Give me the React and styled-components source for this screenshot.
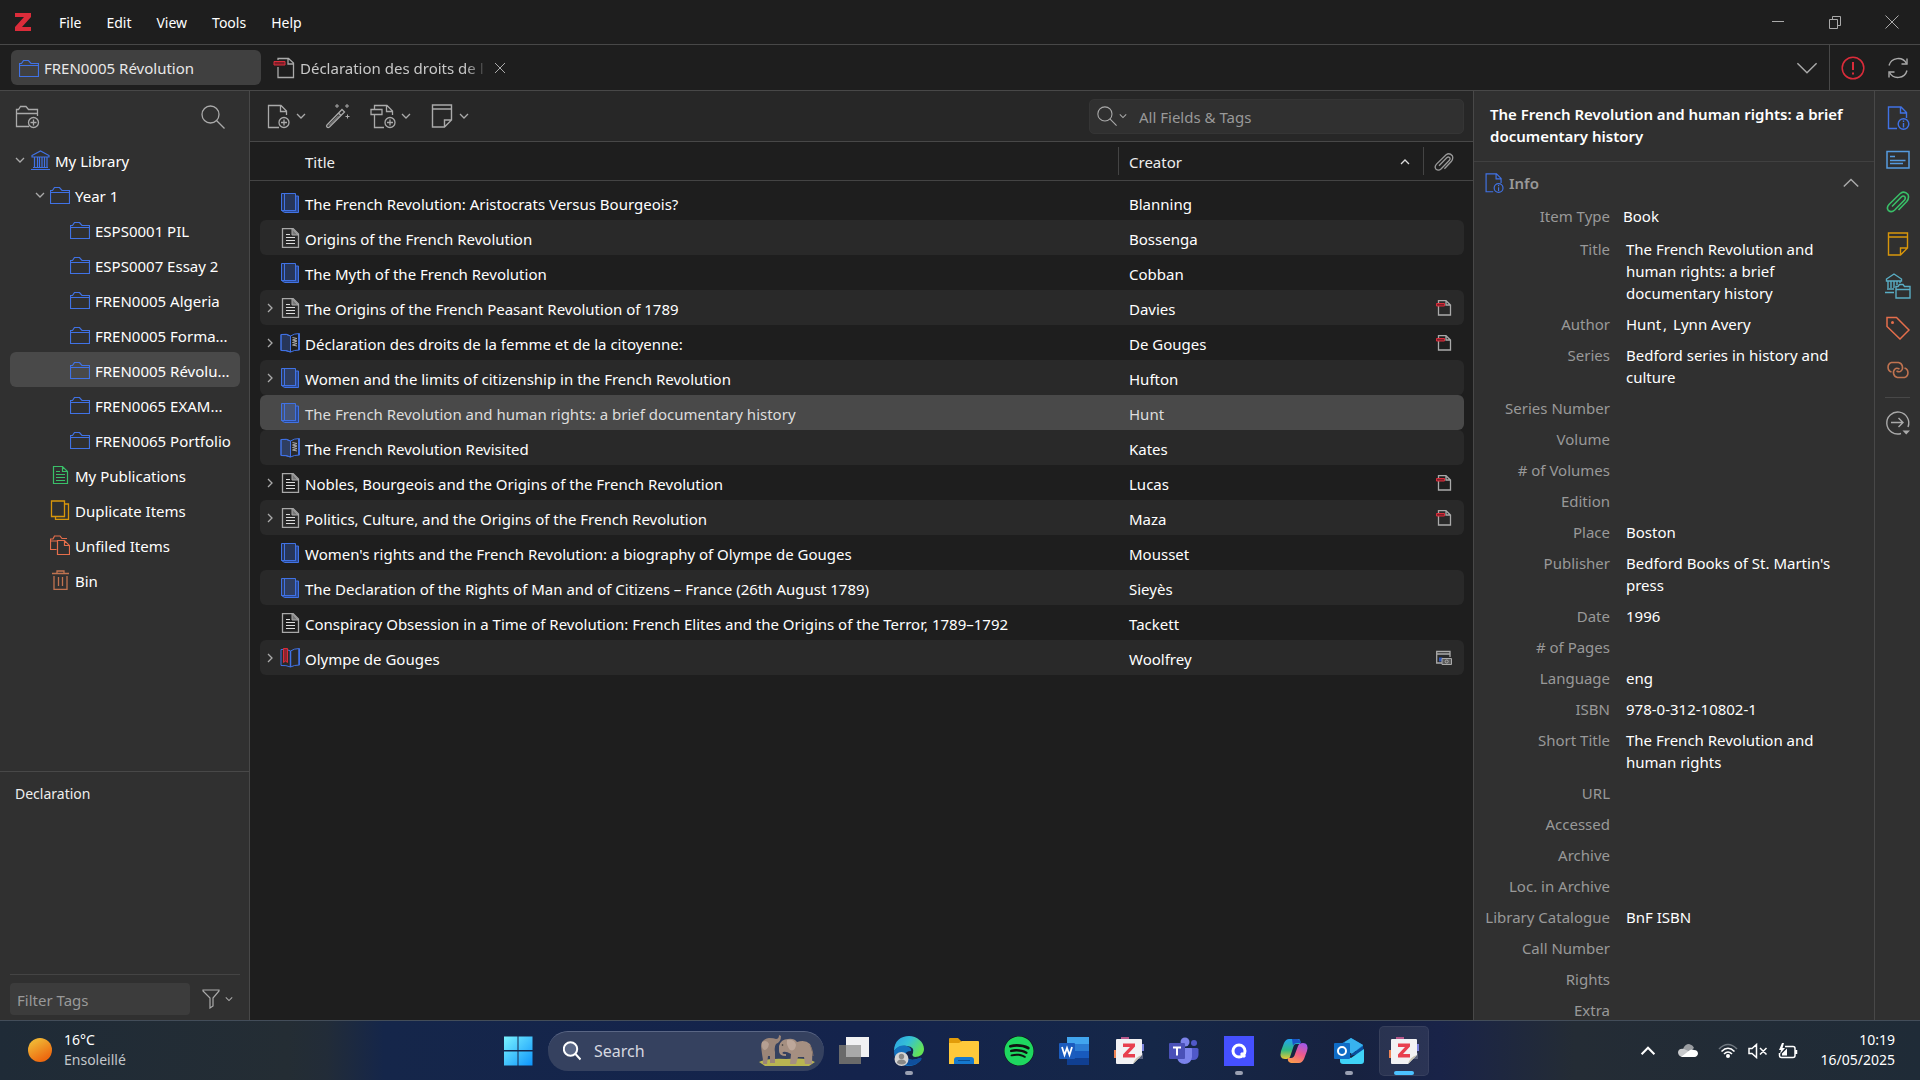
import React, { useState } from "react"
import styled, { createGlobalStyle } from "styled-components"
import { FaSpotify } from "react-icons/fa"

const GlobalStyle = createGlobalStyle`
  * {
    box-sizing: border-box;
  }
  body {
    margin: 0;
    background: #1e1e1e;
    color: #fff;
    font-family: "Noto Sans", "Open Sans", sans-serif;
    font-size: 15px;
    line-height: 22px;
  }
  button, input, select {
    font: inherit;
    color: inherit;
    background: none;
    border: 0;
    padding: 0;
    margin: 0;
  }
  svg {
    display: block;
    flex: none;
  }
  ul, dl, dd, h1, h2, p {
    margin: 0;
    padding: 0;
    list-style: none;
  }
`

/* ---------- icons ---------- */

const Svg = ({ w = 20, h = 20, children, ...rest }) => (
  <svg width={w} height={h} viewBox={`0 0 ${w} ${h}`} fill="none" stroke="currentColor" aria-hidden="true" {...rest}>
    {children}
  </svg>
)

const Folder = () => (
  <Svg color="#4072e5">
    <path d="M.5 18.5V5.5H2.5L4.5 2.5H9.5L12 5.5H19.5V18.5ZM.5 7.5H19.5" strokeWidth="1.2" />
  </Svg>
)

const Library = () => (
  <Svg color="#4072e5">
    <path d="M1 19.5H20M3 17.5H18M2 5.5L10.500 1L19 5.500V7H2ZM4.500 7V17M7.500 7V17M9.500 7V17M12 7V17M14.500 7V17M17 7V17" strokeWidth="1.200" />
  </Svg>
)

const Publications = () => (
  <Svg color="#39bf68">
    <path d="M3.500 1.500H12.500L17.500 6.500V18.500H3.500ZM12.500 1.500V6.500H17.500M6 6.500H10M6 9.500H15M6 12.500H15M6 15.500H15" strokeWidth="1.200" />
  </Svg>
)

const Duplicate = () => (
  <Svg color="#d8960b">
    <path d="M1.500 1H14.500V16.500H1.500ZM14.500 4H18.500V19.500H5.500V16.500" strokeWidth="1.300" />
  </Svg>
)

const Unfiled = () => (
  <Svg color="#e56e4b">
    <path d="M6.500 14.500H.500V4H3L4.500 1H10L12 3.500H17M.500 6H7M7.500 5.500H14.500L19.500 10.500V19.500H7.500ZM14.500 5.500V10.500H19.500" strokeWidth="1.200" />
  </Svg>
)

const Bin = () => (
  <Svg color="#c07350">
    <path d="M2 3.500H19M7 3V1H14V3M4 6V19.500H17V6M8.500 7V16M12.500 7V16" strokeWidth="1.300" />
  </Svg>
)

const Book = () => (
  <Svg color="#4072e5">
    <path d="M15.500 3H18.500V19.500H4.500L1.500 17.500H15.500Z" fill="#2b4a94" />
    <path d="M1.500 .500H15.500V17.500H1.500Z" fill="#4072e54d" />
    <path d="M4.500 .500V17.500" />
  </Svg>
)

const Article = () => (
  <Svg color="#a8a8a8">
    <path d="M2.500 .500H13L18.500 6V19.500H2.500Z" strokeWidth="1.300" />
    <path d="M12 .500V7H18Z" fill="#777" />
    <path d="M6 6.500H10M6 9.500H15M6 12.500H15M6 15.500H15" stroke="#ddd" />
  </Svg>
)

const Section = () => (
  <Svg color="#4072e5">
    <path d="M1 1.500Q7 .500 10.500 3Q14 .500 19.500 .500V17Q14 17 10.500 19Q6 17 1 17.500Z" />
    <path d="M1 1.500Q7 .500 10.500 3V19Q6 17 1 17.500Z" fill="#4072e54d" />
    <path d="M19 1V17" strokeWidth="2" />
    <path d="M12.500 4.500L17 5.500L12.500 7L17 8L12.500 9.500L17 10.500L12.500 12L17 13" stroke="#aaa" />
  </Svg>
)

const Dictionary = () => (
  <Svg color="#4072e5">
    <path d="M1 1.500Q7 .500 10.500 3Q14 .500 19.500 .500V17Q14 17 10.500 19Q6 17 1 17.500Z" />
    <path d="M10.500 3V19M19 1V17" strokeWidth="1.500" />
    <path d="M3.500 .500H7.500V14.500L5.500 13L3.500 14.500Z" fill="#8a2530" stroke="#db2c3a" />
  </Svg>
)

const SmallPdf = () => (
  <Svg w={16} h={16} color="#aaa">
    <path d="M2.500 .700H10L14.500 5V15H2.500ZM10 1V5H14.500" strokeWidth="1.300" />
    <path d="M.500 3.500H8.500V6H.500Z" fill="#7c1f29" stroke="#db2c3a" />
  </Svg>
)

const Snapshot = () => (
  <Svg w={16} h={16} color="#aaa">
    <path d="M6 13H.700V1.500H14V7M1 4H14" strokeWidth="1.300" />
    <path d="M3 7.500H6.500V11.500H3Z" fill="#2f55b5" stroke="none" />
    <path d="M6 8.500H15.500V14.500H6Z" fill="#5a5a5a" />
    <circle cx="10.700" cy="11.500" r="1.500" />
  </Svg>
)

const TabPdf = () => (
  <Svg w={22} h={22} color="#aaa">
    <path d="M5 10V20.500H20.500V6L15.500 1.500H5V3M15 1.500V7H20.500" strokeWidth="1.300" />
    <path d="M1 4.500H12V8H1Z" fill="#7c1f29" stroke="#db2c3a" />
  </Svg>
)

const NewCollection = () => (
  <Svg w={25} h={25}>
    <path d="M14 22.500H1.500V5.500H3.500L5.500 2.500H11L13.500 5.500H22.500V12M1.500 9.500H22.500" strokeWidth="1.300" />
    <circle cx="18.500" cy="18.500" r="5" strokeWidth="1.300" />
    <path d="M18.500 15.500V21.500M15.500 18.500H21.500" strokeWidth="1.300" />
  </Svg>
)

const Magnifier = ({ size = 24 }) => (
  <Svg w={size} h={size} viewBox="0 0 24 24">
    <circle cx="9.500" cy="9.500" r="8.500" strokeWidth="1.300" />
    <path d="M15.500 15.500L23.500 23.500" strokeWidth="1.300" />
  </Svg>
)

const NewItem = () => (
  <Svg w={24} h={25}>
    <path d="M12 23.500H1.500V1.500H14L19.500 7V11M13.500 1.500V7.500H19.500" strokeWidth="1.300" />
    <circle cx="17" cy="18.500" r="5" strokeWidth="1.300" />
    <path d="M17 15.500V21.500M14 18.500H20" strokeWidth="1.300" />
  </Svg>
)

const Wand = () => (
  <Svg w={26} h={26}>
    <path d="M2 22L17 6.500L19.500 9L4.500 24Q3 25 2 24Q1 23 2 22ZM13.500 10L16 12.500" strokeWidth="1.300" />
    <path d="M4 22.500L14 12.500" />
    <path d="M12 1V5M10 3H14M22 1V5M20 3H24M22.500 11.500V15.500M20.500 13.500H24.500" />
  </Svg>
)

const NewAttachment = () => (
  <Svg w={26} h={25}>
    <path d="M14 23.500H4.500V11M4.500 5V1.500H17L22.500 7V11M16.500 1.500V7.500H22.500M1 5.500H12V10.500H1Z" strokeWidth="1.300" />
    <circle cx="20" cy="18.500" r="5" strokeWidth="1.300" />
    <path d="M20 15.500V21.500M17 18.500H23" strokeWidth="1.300" />
  </Svg>
)

const Note = ({ color }) => (
  <Svg w={24} h={24} color={color}>
    <path d="M2.500 1H21.500V16L14.500 23H2.500ZM2.500 5H21.500M14.500 23V16H21.500" strokeWidth="1.400" />
  </Svg>
)

const InfoDoc = ({ size = 24 }) => (
  <Svg w={size} h={size} viewBox="0 0 24 24" color="#4072e5">
    <path d="M11 22.500H2.500V1H15L20.500 6.500V12M14.500 1V7H20.500" strokeWidth="1.400" />
    <circle cx="17.500" cy="18" r="5.300" strokeWidth="1.400" />
    <path d="M17.500 17V21.500M17.500 14.500V16" strokeWidth="1.400" />
  </Svg>
)

const Abstract = () => (
  <Svg w={24} h={24} color="#559ade">
    <path d="M1 3.500H23V20H1Z" strokeWidth="1.500" />
    <path d="M4 8.500H9M4 12.500H19.500M4 15.500H17" strokeWidth="1.500" />
  </Svg>
)

const Clip = ({ size = 24, color }) => (
  <Svg w={size} h={size} viewBox="0 0 24 24" color={color}>
    <path
      d="M12.500 20L20.700 11.500Q23.500 8 22 4.500Q18.500 .500 14.500 3.300L3 14.500Q0 18 2.500 20.700Q5.500 23 8.700 20L18.500 10Q20 8 18.600 6.500Q17 5.300 15.300 7L6 16.500"
      strokeWidth="1.600"
    />
  </Svg>
)

const LibrariesCollections = () => (
  <Svg w={26} h={26} color="#59adc4">
    <path d="M1.500 6L9 1L16.500 6V8H1.500ZM3 8V15M6 8V15M9 8V15M12 8V12M15 8V10M2 16H9M0 19.500H9" strokeWidth="1.400" />
    <path d="M11 25V13.500H13L14.500 11.500H18L19.500 13.500H25V25ZM11 16.500H25" strokeWidth="1.400" />
  </Svg>
)

const Tag = () => (
  <Svg w={24} h={24} color="#e56e4b">
    <path d="M1 1.500H10.500L23 14L14 23L1 10.500Z" strokeWidth="1.500" />
    <circle cx="6.500" cy="6.500" r="1.500" fill="currentColor" stroke="none" />
  </Svg>
)

const Related = () => (
  <Svg w={26} h={24} color="#c07350">
    <path d="M6.500 14A5 5 0 0 1 6.500 4.500H13.500A5 5 0 0 1 16 13Q14.500 14.500 11.500 13" strokeWidth="1.600" />
    <path d="M19.500 10A5 5 0 0 1 19.500 19.500H12.500A5 5 0 0 1 10 11Q11.500 9.500 14.500 11" strokeWidth="1.600" />
  </Svg>
)

const Locate = () => (
  <Svg w={26} h={26} color="#aaa">
    <path d="M16 23.500A11 11 0 1 1 23 17" strokeWidth="1.400" />
    <path d="M6 12.500H18M13.500 8L18 12.500L13.500 17" strokeWidth="1.400" />
    <path d="M17.500 20.500H25L21.200 24.500Z" fill="currentColor" stroke="none" />
  </Svg>
)

const Funnel = () => (
  <Svg w={18} h={20}>
    <path d="M1 1H17V2L11 9V17L8 19V9L1 2Z" strokeWidth="1.200" />
  </Svg>
)

const chevrons = {
  down: "M1 3L5 7L9 3",
  up: "M1 7L5 3L9 7",
  right: "M3 1L7 5L3 9",
}

const Chevron = ({ dir = "down", size = 10, thin = 1.3 }) => (
  <Svg w={size} h={size} viewBox="0 0 10 10" strokeWidth={thin}>
    <path d={chevrons[dir]} />
  </Svg>
)

const Warning = () => (
  <Svg w={24} h={24} color="#db2c3a">
    <circle cx="12" cy="12" r="10.800" strokeWidth="1.500" />
    <path d="M12 6V14M12 16.500V18.500" strokeWidth="2" />
  </Svg>
)

const Sync = () => (
  <Svg w={22} h={22}>
    <path d="M2 8.500A9.500 9.500 0 0 1 19.500 6.500M20 13.500A9.500 9.500 0 0 1 2.500 15.500" strokeWidth="1.400" />
    <path d="M20 1.500V7H14.500M2 20.500V15H7.500" strokeWidth="1.400" />
  </Svg>
)

/* ---------- taskbar drawings ---------- */

const WindowsLogo = () => (
  <Svg w={30} h={30} stroke="none">
    <linearGradient id="win" x1="0" y1="0" x2="1" y2="1" gradientUnits="objectBoundingBox">
      <stop offset="0" stopColor="#7af3ff" />
      <stop offset="1" stopColor="#0d94fb" />
    </linearGradient>
    <path fill="url(#win)" d="M1 .500H14.500V14H1ZM15.500 .500H29.500V14H15.500ZM1 15.500H14.500V29.500H1ZM15.500 15.500H29.500V29.500H15.500Z" />
  </Svg>
)

const Elephants = () => (
  <Svg w={56} h={34} stroke="none">
    <path d="M0 28Q8 24 27 25Q48 23 56 28L50 32H6Z" fill="#b9b552" />
    <path d="M2 12Q3 5 10 4Q15 4 17 5Q20 5 20 1L22 2Q22 8 17 10Q15 13 16 18V29H11V22H9L8 30H4Q4 24 3 20Z" fill="#9b8578" />
    <path d="M3 8Q8 5 10 10Q9 16 5 16Q2 13 3 8Z" fill="#b59f92" />
    <path d="M20 12Q22 5 29 5Q35 4 38 8Q46 5 51 10Q54 15 53 30H46L45 23H39L37 30H31L32 20Q27 17 24 18Q22 20 27 20V22Q20 22 20 17Z" fill="#a58f81" />
    <path d="M28 6Q36 5 37 11Q36 18 31 16Q27 11 28 6Z" fill="#bda79a" />
    <path d="M51 11Q54 17 54 22" stroke="#8c776a" />
    <circle cx="23.500" cy="11" r=".800" fill="#333" />
  </Svg>
)

const TaskView = () => (
  <Svg w={30} h={28} stroke="none">
    <path d="M0 8H22V27H0Z" fill="#6a6a6a" />
    <path d="M7 0H30V20H7Z" fill="#f1f1f3" />
    <path d="M7 8H22V20H7Z" fill="#a9a9a9" />
  </Svg>
)

const Edge = () => (
  <Svg w={30} h={30} stroke="none">
    <linearGradient id="edgeTop" x1="0" y1="0" x2="1" y2="0.500">
      <stop offset="0" stopColor="#2b9fe6" />
      <stop offset=".5" stopColor="#35c1d5" />
      <stop offset="1" stopColor="#64e356" />
    </linearGradient>
    <path d="M0 15C0 5 7 0 15 0S30 6 30 13C30 18 26 21 21 21Q17 20 19 17Q21 11 13 10Q5 9 0 15Z" fill="url(#edgeTop)" />
    <path d="M0 15Q5 8 13 10Q18 12 17 15Q10 15 12 21Q16 26 26 22Q28 21 27 24Q21 31 13 30Q0 28 0 15Z" fill="#1470bd" />
    <path d="M12 20Q15 27 26 22Q28 21 27 24Q21 31 13 29Q8 24 12 20Z" fill="#0f4f9c" />
    <circle cx="7.500" cy="23" r="7" fill="#d4d4d4" />
    <circle cx="7.500" cy="20.500" r="2.700" fill="#888" />
    <path d="M3 27Q3 23.500 7.500 23.500T12 27Q8 30 3 27Z" fill="#888" />
  </Svg>
)

const Explorer = () => (
  <Svg w={30} h={28} stroke="none">
    <path d="M0 2Q0 1 1 1H9L13 5V9H0Z" fill="#e29c0a" />
    <path d="M0 6H10L13 4H29Q30 4 30 5V27H0Z" fill="#ffc93a" />
    <path d="M5 27V23Q5 20 8 20H22Q25 20 25 23V27Z" fill="#1579cf" />
    <path d="M9 23.500H21" stroke="#0b4e91" />
  </Svg>
)

const Spotify = styled.span`
  display: block;
  border-radius: 50%;
  background: #111;
  color: #1ed760;
  font-size: 30px;
`

const Word = () => (
  <Svg w={30} h={28} stroke="none">
    <path d="M8 0H30V7H8Z" fill="#41a5ee" />
    <path d="M8 7H30V14H8Z" fill="#2b7cd3" />
    <path d="M8 14H30V21H8Z" fill="#185abd" />
    <path d="M8 21H30V28H8Z" fill="#103f91" />
    <rect y="6" width="16" height="16" rx="1" fill="#1b5cbe" />
    <path d="M3 10L5.500 18L8 11L10.500 18L13 10" stroke="#fff" strokeWidth="1.800" />
  </Svg>
)

const ZoteroApp = () => (
  <Svg w={30} h={30} stroke="none">
    <path d="M7 1H15V5H7Z" fill="#b7588a" />
    <path d="M0 14H4V22H0Z" fill="#ee8455" />
    <path d="M26 8H30V15H26Z" fill="#7c83dd" />
    <path d="M24 17H29V23H24Z" fill="#59627e" />
    <path d="M3 3H27Q28 3 28 4V19L19 28H3Q2 28 2 27V4Q2 3 3 3Z" fill="#f2f2f4" />
    <path d="M28 19L19 28Q21 21 28 19Z" fill="#c9c5b3" />
    <path d="M9 7.500H21V10.500L14 18H21V21.500H9V18.500L16 11H9Z" fill="#e8404f" />
  </Svg>
)

const Teams = () => (
  <Svg w={30} h={28} stroke="none">
    <circle cx="16" cy="5" r="4.500" fill="#7b83eb" />
    <circle cx="25" cy="6" r="3" fill="#5059c9" />
    <path d="M18 11H28Q29.500 11 29.500 12.500V18Q29 23 24 23H20Z" fill="#5059c9" />
    <path d="M8 11H22Q23 11 23 12V20Q22 27 15.500 27T8 20Z" fill="#7b83eb" />
    <rect y="6" width="16" height="16" rx="1" fill="#4a51b8" />
    <path d="M4 10.500H12M8 10.500V18.500" stroke="#fff" strokeWidth="2" />
  </Svg>
)

const Qonto = () => (
  <Svg w={30} h={30} stroke="none">
    <path d="M0 0H30V30H0Z" fill="#4550ff" />
    <circle cx="15" cy="15" r="6" stroke="#fff" strokeWidth="3" />
    <path d="M17 17L21 21" stroke="#fff" strokeWidth="3" />
  </Svg>
)

const Copilot = () => (
  <Svg w={30} h={28} stroke="none">
    <linearGradient id="cpl" x1="0" y1="0" x2="0" y2="1">
      <stop offset="0" stopColor="#21a2f3" />
      <stop offset=".55" stopColor="#2fb983" />
      <stop offset="1" stopColor="#e9c832" />
    </linearGradient>
    <linearGradient id="cpr" x1="0.700" y1="0" x2="0.300" y2="1">
      <stop offset="0" stopColor="#a259e8" />
      <stop offset=".5" stopColor="#ee5a8c" />
      <stop offset="1" stopColor="#fb9a4d" />
    </linearGradient>
    <path d="M10 2H20Q22 3 21 7H17Q15 7 14 11L11 20Q10 22 6 22Q0 22 2 14L5 6Q7 2 10 2Z" fill="url(#cpl)" />
    <path d="M13 2H18Q21 2 22 6H18Q15 6 14 9Z" fill="#1b55c8" />
    <path d="M20 26H12Q8 25 9 21H12Q15 21 16 17L19 9Q20 6 24 6Q30 6 28 14L25 22Q23 26 20 26Z" fill="url(#cpr)" />
  </Svg>
)

const Outlook = () => (
  <Svg w={30} h={28} stroke="none">
    <path d="M5 8L17 1L29 8V14H5Z" fill="#1b83d2" />
    <path d="M11 5L17 1L29 8L18 17L10 12Z" fill="#38b2ee" />
    <path d="M29 9L15 19L30 16Z" fill="#0a4f9e" />
    <path d="M30 12V24Q30 27 27 27H9Q6 27 6 24V16L17 21Z" fill="#3fd3f7" />
    <rect y="6" width="16" height="16" rx="1" fill="#0f6cc6" />
    <circle cx="8" cy="14" r="4" stroke="#fff" strokeWidth="2" />
  </Svg>
)

const Cloud = () => (
  <Svg w={20} h={14} stroke="none">
    <path d="M5 5Q7 0 11 0Q15 1 16 4L10 9H2Q1 5 5 5Z" fill="#9a9da1" />
    <path d="M4 13Q0 12 0 8Q1 4 6 5L19 11Q18 13 16 13Z" fill="#c8cacc" />
    <path d="M3 13L12 6Q14 5 16 6Q20 6 20 10Q19 13 16 13Z" fill="#fff" />
  </Svg>
)

const Wifi = () => (
  <Svg w={20} h={16} strokeWidth="1.600">
    <path d="M1 6Q10-3 19 6" stroke="#6f777f" />
    <path d="M3.500 8.500Q10 2 16.500 8.500M6 11Q10 7 14 11" />
    <circle cx="10" cy="13" r="2" fill="currentColor" stroke="none" />
  </Svg>
)

const Muted = () => (
  <Svg w={20} h={16} strokeWidth="1.500">
    <path d="M1 5.500H4L8.500 1.500V14.500L4 10.500H1ZM12 5L18.500 11.500M18.500 5L12 11.500" />
  </Svg>
)

const Battery = () => (
  <Svg w={20} h={16} strokeWidth="1.500">
    <path d="M7 3.500H15Q17 3.500 17 5.500V12.500Q17 14.500 15 14.500H3.500Q1.500 14.500 1.500 12.500V10M18.500 7V11" />
    <path d="M4 0L1 7H3L2 11L7 5H4.500L6 0ZM4 12.500V10.500L9 5.500V12.500Z" fill="currentColor" stroke="none" />
  </Svg>
)

/* ---------- layout ---------- */

const Shell = styled.div`
  display: flex;
  flex-direction: column;
  height: 100vh;
  overflow: hidden;
`

const TitleBar = styled.header`
  display: flex;
  align-items: center;
  height: 45px;
  flex: none;
  padding-left: 15px;
  border-bottom: 1px solid #484848;
`

const Menu = styled.nav`
  display: flex;
  gap: 25px;
  margin-left: 28px;
  padding-top: 1px;
  font-size: 14px;
  flex: 1;
`

const IconButton = styled.button`
  display: flex;
  align-items: center;
  justify-content: center;
  gap: 5px;
  color: ${props => props.$color || "#aaa"};
`

const WindowControls = styled.div`
  display: flex;
  button {
    width: 57px;
    height: 44px;
  }
`

const TabBar = styled.div`
  display: flex;
  align-items: center;
  height: 46px;
  flex: none;
  padding-left: 11px;
  border-bottom: 1px solid #484848;
`

const Tab = styled.button`
  display: flex;
  align-items: center;
  gap: 5px;
  height: 35px;
  padding-left: 8px;
  border-radius: 6px;
  color: ${props => (props.$active ? "#e8e8e8" : "#c8c8c8")};
  background: ${props => (props.$active ? "#404040" : "none")};
  width: ${props => (props.$active ? "250px" : "auto")};
  & + & {
    margin-left: 4px;
  }
`

const FadingText = styled.span`
  width: 188px;
  white-space: nowrap;
  text-align: left;
  mask-image: linear-gradient(to right, #000 165px, transparent);
`

const TabClose = styled(IconButton)`
  width: 24px;
  flex: none;
`

const TabTools = styled.div`
  display: flex;
  align-items: center;
  align-self: stretch;
  margin-left: auto;
  > button {
    height: 45px;
    width: 45px;
  }
  > button:first-child {
    border-right: 1px solid #484848;
    width: 46px;
  }
`

const Body = styled.div`
  display: grid;
  grid-template-columns: 250px minmax(0, 1fr) 401px 46px;
  flex: 1;
  min-height: 0;
`

const Sidebar = styled.aside`
  display: flex;
  flex-direction: column;
  background: #303030;
  border-right: 1px solid #484848;
  min-height: 0;
`

const SidebarTools = styled.div`
  display: flex;
  align-items: center;
  justify-content: space-between;
  height: 51px;
  padding: 0 24px 0 15px;
  flex: none;
`

const Tree = styled.ul`
  flex: 1;
  padding: 0 9px 0 10px;
`

const TreeRow = styled.button`
  display: flex;
  align-items: center;
  width: 100%;
  height: 35px;
  padding-left: ${props => props.$level * 20}px;
  border-radius: 6px;
  background: ${props => (props.$selected ? "#494949" : "none")};
  white-space: nowrap;
`

const Twisty = styled.span`
  display: flex;
  justify-content: center;
  width: 20px;
  flex: none;
  color: #aaa;
`

const RowLabel = styled.span`
  padding: 2px 0 0 5px;
  white-space: nowrap;
`

const TagPanel = styled.section`
  display: flex;
  flex-direction: column;
  height: 249px;
  padding: 11px 9px 5px 10px;
  border-top: 1px solid #484848;
  flex: none;
`

const TagList = styled.div`
  flex: 1;
  padding-left: 5px;
  font-size: 14px;
  border-bottom: 1px solid #444;
  color: #eee;
`

const TagFilter = styled.div`
  display: flex;
  align-items: center;
  gap: 12px;
  padding-top: 8px;
  input {
    width: 180px;
    height: 32px;
    padding: 2px 7px 0;
    border-radius: 4px;
    background: #3c3c3c;
  }
  input::placeholder {
    color: #999;
    opacity: 1;
  }
`

const Main = styled.main`
  display: flex;
  flex-direction: column;
  min-width: 0;
  background: #1e1e1e;
`

const Toolbar = styled.div`
  display: flex;
  align-items: center;
  gap: 19px;
  height: 51px;
  padding: 0 9px 0 17px;
  background: #272727;
  border-bottom: 1px solid #484848;
`

const SearchBox = styled.div`
  display: flex;
  align-items: center;
  width: 375px;
  height: 35px;
  margin-left: auto;
  padding-left: 7px;
  border: 1px solid #353535;
  border-radius: 5px;
  background: #303030;
  color: #aaa;
  button {
    gap: 2px;
  }
  input {
    flex: 1;
    min-width: 0;
    margin-left: 12px;
    padding-top: 2px;
  }
  input::placeholder {
    color: #999;
    opacity: 1;
  }
`

const Items = styled.table`
  display: block;
  thead, tbody {
    display: block;
    padding: 0 9px 0 10px;
  }
  thead {
    border-bottom: 1px solid #444;
  }
  tbody {
    padding-top: 4px;
  }
  tr {
    display: grid;
    grid-template-columns: minmax(0, 1fr) 305px 41px;
    border-radius: 6px;
  }
  th, td {
    display: flex;
    align-items: center;
    padding: 0;
    font-weight: 400;
  }
`

const HeadCell = styled.th`
  && {
    height: 28px;
    margin: 5px 0;
    padding: 1px 13px 0 ${props => props.$indent}px;
    border-left: ${props => (props.$divided ? "1px solid #444" : "0")};
    justify-content: space-between;
    color: #eee;
  }
`

const ItemRow = styled.tr`
  height: 35px;
  background: ${props => (props.$selected ? "#494949" : "transparent")};
  color: ${props => (props.$selected ? "#ddd" : "#fff")};
  &:nth-child(even) {
    background: #292929;
  }
`

const CreatorCell = styled.td`
  && {
    padding: 2px 0 0 11px;
  }
`

const AttachCell = styled.td`
  && {
    justify-content: center;
  }
`

const Details = styled.section`
  background: #303030;
  border-left: 1px solid #484848;
  overflow: hidden;
  min-height: 0;
`

const DetailsTitle = styled.h1`
  height: 71px;
  padding: 12px 16px;
  border-bottom: 1px solid #404040;
  font-size: 15px;
  font-weight: 600;
`

const SectionHead = styled.h2`
  display: flex;
  align-items: center;
  gap: 5px;
  height: 40px;
  padding: 1px 14px 0 10px;
  font-size: 15px;
  font-weight: 600;
  color: #999;
  button {
    margin-left: auto;
  }
`

const Field = styled.div`
  display: grid;
  grid-template-columns: 126px minmax(0, 1fr);
  column-gap: 16px;
  padding: 4px 24px 5px 10px;
  &:first-child {
    padding-top: 3px;
    padding-bottom: 7px;
  }
  dt {
    text-align: right;
    color: #999;
    white-space: nowrap;
  }
  select {
    appearance: none;
    display: block;
    height: 22px;
    margin-left: -3px;
  }
`

const Comma = styled.span`
  margin: 0 6px 0 2px;
`

const Rail = styled.nav`
  display: flex;
  flex-direction: column;
  align-items: center;
  gap: 18px;
  padding-top: 15px;
  background: #303030;
  border-left: 1px solid #484848;
  button {
    width: 26px;
    height: 24px;
  }
  hr {
    width: 25px;
    margin: -3px 0 -5px;
    border: 0;
    border-top: 1px solid #484848;
  }
`

const Taskbar = styled.footer`
  display: grid;
  grid-template-columns: 1fr auto 1fr;
  align-items: center;
  height: 60px;
  flex: none;
  border-top: 1px solid #434d59;
  background: linear-gradient(to right, #1f2b37, #242d34 15%, #222c38 17%, #15264a 20%, #14234c 45%, #152748 60%, #17223f 70%, #192348 75%, #242c35 82%, #1f2b37);
  font-size: 14px;
  line-height: 20px;
`

const Weather = styled.button`
  display: flex;
  align-items: center;
  gap: 12px;
  padding: 0 0 2px 28px;
  text-align: left;
  small {
    display: block;
    font-size: 14px;
    color: #c3c7cb;
  }
`

const Sun = styled.span`
  width: 24px;
  height: 24px;
  border-radius: 50%;
  background: linear-gradient(150deg, #f0b232 20%, #ee6a10 80%);
`

const Apps = styled.div`
  display: flex;
  align-items: center;
  gap: 5px;
  padding-left: 2px;
`

const TaskButton = styled.button`
  display: flex;
  align-items: center;
  justify-content: center;
  position: relative;
  width: 50px;
  height: 50px;
  border-radius: 5px;
  background: ${props => (props.$state === "active" ? "#ffffff14" : "none")};
  box-shadow: ${props => (props.$state === "active" ? "inset 0 0 0 1px #ffffff10" : "none")};
  &::after {
    content: "";
    display: ${props => (props.$state ? "block" : "none")};
    position: absolute;
    bottom: 1px;
    width: ${props => (props.$state === "active" ? 20 : 8)}px;
    height: 4px;
    border-radius: 2px;
    background: ${props => (props.$state === "active" ? "#4cc2ff" : "#9aa0b2")};
  }
`

const TaskSearch = styled.label`
  display: flex;
  align-items: center;
  gap: 13px;
  width: 276px;
  height: 40px;
  padding: 0 9px 0 15px;
  border-radius: 20px;
  border-top: 1px solid #5a6684;
  background: #35415f;
  font-size: 16px;
  input {
    flex: 1;
    min-width: 0;
  }
  input::placeholder {
    color: #d5d8e0;
    opacity: 1;
  }
`

const Tray = styled.div`
  display: flex;
  align-items: center;
  justify-content: flex-end;
  gap: 10px;
  padding-right: 25px;
  time {
    min-width: 87px;
    padding-bottom: 2px;
    text-align: right;
  }
`

const CloudSlot = styled.span`
  padding: 0 10px 0 12px;
`

/* ---------- data ---------- */

const tree = [
  { name: "My Library", level: 0, icon: <Library />, open: true },
  { name: "Year 1", level: 1, icon: <Folder />, open: true },
  { name: "ESPS0001 PIL", level: 2, icon: <Folder /> },
  { name: "ESPS0007 Essay 2", level: 2, icon: <Folder /> },
  { name: "FREN0005 Algeria", level: 2, icon: <Folder /> },
  { name: "FREN0005 Forma...", level: 2, icon: <Folder /> },
  { name: "FREN0005 Révolu...", level: 2, icon: <Folder /> },
  { name: "FREN0065 EXAM...", level: 2, icon: <Folder /> },
  { name: "FREN0065 Portfolio", level: 2, icon: <Folder /> },
  { name: "My Publications", level: 1, icon: <Publications /> },
  { name: "Duplicate Items", level: 1, icon: <Duplicate /> },
  { name: "Unfiled Items", level: 1, icon: <Unfiled /> },
  { name: "Bin", level: 1, icon: <Bin /> },
]

const items = [
  { icon: <Book />, title: "The French Revolution: Aristocrats Versus Bourgeois?", creator: "Blanning" },
  { icon: <Article />, title: "Origins of the French Revolution", creator: "Bossenga" },
  { icon: <Book />, title: "The Myth of the French Revolution", creator: "Cobban" },
  { icon: <Article />, title: "The Origins of the French Peasant Revolution of 1789", creator: "Davies", child: true, file: <SmallPdf /> },
  { icon: <Section />, title: "Déclaration des droits de la femme et de la citoyenne:", creator: "De Gouges", child: true, file: <SmallPdf /> },
  { icon: <Book />, title: "Women and the limits of citizenship in the French Revolution", creator: "Hufton", child: true },
  { icon: <Book />, title: "The French Revolution and human rights: a brief documentary history", creator: "Hunt" },
  { icon: <Section />, title: "The French Revolution Revisited", creator: "Kates" },
  { icon: <Article />, title: "Nobles, Bourgeois and the Origins of the French Revolution", creator: "Lucas", child: true, file: <SmallPdf /> },
  { icon: <Article />, title: "Politics, Culture, and the Origins of the French Revolution", creator: "Maza", child: true, file: <SmallPdf /> },
  { icon: <Book />, title: "Women's rights and the French Revolution: a biography of Olympe de Gouges", creator: "Mousset" },
  { icon: <Book />, title: "The Declaration of the Rights of Man and of Citizens – France (26th August 1789)", creator: "Sieyès" },
  { icon: <Article />, title: "Conspiracy Obsession in a Time of Revolution: French Elites and the Origins of the Terror, 1789–1792", creator: "Tackett" },
  { icon: <Dictionary />, title: "Olympe de Gouges", creator: "Woolfrey", child: true, file: <Snapshot /> },
]

const fields = [
  ["Title", "The French Revolution and human rights: a brief documentary history"],
  ["Author", <>Hunt<Comma>,</Comma>Lynn Avery</>],
  ["Series", "Bedford series in history and culture"],
  ["Series Number", ""],
  ["Volume", ""],
  ["# of Volumes", ""],
  ["Edition", ""],
  ["Place", "Boston"],
  ["Publisher", "Bedford Books of St. Martin's press"],
  ["Date", "1996"],
  ["# of Pages", ""],
  ["Language", "eng"],
  ["ISBN", "978-0-312-10802-1"],
  ["Short Title", "The French Revolution and human rights"],
  ["URL", ""],
  ["Accessed", ""],
  ["Archive", ""],
  ["Loc. in Archive", ""],
  ["Library Catalogue", "BnF ISBN"],
  ["Call Number", ""],
  ["Rights", ""],
  ["Extra", ""],
]

const railItems = [
  ["Info", <InfoDoc />],
  ["Abstract", <Abstract />],
  ["Attachments", <Clip color="#39bf68" />],
  ["Notes", <Note color="#d8960b" />],
  ["Libraries and Collections", <LibrariesCollections />],
  ["Tags", <Tag />],
  ["Related", <Related />],
]

const apps = [
  ["Task View", <TaskView />],
  ["Edge", <Edge />, "open"],
  ["File Explorer", <Explorer />],
  ["Spotify", <Spotify><FaSpotify /></Spotify>],
  ["Word", <Word />],
  ["Zotero", <ZoteroApp />],
  ["Teams", <Teams />],
  ["Qonto", <Qonto />, "open"],
  ["Copilot", <Copilot />],
  ["Outlook", <Outlook />, "open"],
  ["Zotero library", <ZoteroApp />, "active"],
]

const App = () => {
  const [collection, setCollection] = useState(6)
  const [selected, setSelected] = useState(6)

  return (
    <Shell>
      <GlobalStyle />
      <TitleBar>
        <Svg w={16} h={18} stroke="none">
          <path d="M0 0H16V4L7 14H16V18H0V14L9 4H0Z" fill="#db2c3a" />
        </Svg>
        <Menu>
          {["File", "Edit", "View", "Tools", "Help"].map(name => (
            <button key={name}>{name}</button>
          ))}
        </Menu>
        <WindowControls>
          <IconButton aria-label="Minimise">
            <Svg w={14} h={14}><path d="M1 6.500H13" /></Svg>
          </IconButton>
          <IconButton aria-label="Restore">
            <Svg w={14} h={14}><path d="M1.500 4.500H9.500V13.500H1.500ZM4.500 4.500V1.500H12.500V10.500H9.500" /></Svg>
          </IconButton>
          <IconButton aria-label="Close">
            <Svg w={14} h={14}><path d="M.500 .500L13.500 13.500M13.500 .500L.500 13.500" /></Svg>
          </IconButton>
        </WindowControls>
      </TitleBar>

      <TabBar>
        <Tab $active>
          <Folder />
          FREN0005 Révolution
        </Tab>
        <Tab>
          <TabPdf />
          <FadingText>Déclaration des droits de l</FadingText>
        </Tab>
        <TabClose aria-label="Close tab">
          <Svg w={12} h={12}><path d="M1 1L11 11M11 1L1 11" /></Svg>
        </TabClose>
        <TabTools>
          <IconButton aria-label="List tabs"><Chevron size={24} thin={0.6} /></IconButton>
          <IconButton aria-label="Sync error"><Warning /></IconButton>
          <IconButton aria-label="Sync"><Sync /></IconButton>
        </TabTools>
      </TabBar>

      <Body>
        <Sidebar>
          <SidebarTools>
            <IconButton aria-label="New collection"><NewCollection /></IconButton>
            <IconButton aria-label="Filter collections"><Magnifier /></IconButton>
          </SidebarTools>
          <Tree>
            {tree.map((row, i) => (
              <li key={row.name}>
                <TreeRow $level={row.level} $selected={i === collection} onClick={() => setCollection(i)}>
                  <Twisty>{row.open && <Chevron />}</Twisty>
                  {row.icon}
                  <RowLabel>{row.name}</RowLabel>
                </TreeRow>
              </li>
            ))}
          </Tree>
          <TagPanel>
            <TagList>
              <button>Declaration</button>
            </TagList>
            <TagFilter>
              <input placeholder="Filter Tags" aria-label="Filter Tags" />
              <IconButton aria-label="Tag options">
                <Funnel />
                <Chevron size={8} />
              </IconButton>
            </TagFilter>
          </TagPanel>
        </Sidebar>

        <Main>
          <Toolbar>
            <IconButton aria-label="New item"><NewItem /><Chevron /></IconButton>
            <IconButton aria-label="Add by identifier"><Wand /></IconButton>
            <IconButton aria-label="Add attachment"><NewAttachment /><Chevron /></IconButton>
            <IconButton aria-label="New note"><Note /><Chevron /></IconButton>
            <SearchBox>
              <IconButton aria-label="Search mode"><Magnifier size={20} /><Chevron size={8} /></IconButton>
              <input placeholder="All Fields &amp; Tags" aria-label="All Fields &amp; Tags" />
            </SearchBox>
          </Toolbar>
          <Items>
            <thead>
              <tr>
                <HeadCell $indent={45}>Title</HeadCell>
                <HeadCell $indent={10} $divided>
                  Creator
                  <IconButton aria-label="Sorted ascending" $color="#ddd"><Chevron dir="up" /></IconButton>
                </HeadCell>
                <HeadCell $indent={10} $divided aria-label="Attachment"><Clip size={20} color="#999" /></HeadCell>
              </tr>
            </thead>
            <tbody>
              {items.map((item, i) => (
                <ItemRow key={item.title} $selected={i === selected} onClick={() => setSelected(i)}>
                  <td>
                    <Twisty>{item.child && <Chevron dir="right" />}</Twisty>
                    {item.icon}
                    <RowLabel>{item.title}</RowLabel>
                  </td>
                  <CreatorCell>{item.creator}</CreatorCell>
                  <AttachCell>{item.file}</AttachCell>
                </ItemRow>
              ))}
            </tbody>
          </Items>
        </Main>

        <Details>
          <DetailsTitle>The French Revolution and human rights: a brief documentary history</DetailsTitle>
          <SectionHead>
            <InfoDoc size={20} />
            Info
            <IconButton aria-label="Collapse section"><Chevron dir="up" size={18} thin={0.8} /></IconButton>
          </SectionHead>
          <dl>
            <Field>
              <dt><label htmlFor="item-type">Item Type</label></dt>
              <dd>
                <select id="item-type" defaultValue="Book">
                  <option>Book</option>
                </select>
              </dd>
            </Field>
            {fields.map(([name, value]) => (
              <Field key={name}>
                <dt>{name}</dt>
                <dd>{value}</dd>
              </Field>
            ))}
          </dl>
        </Details>

        <Rail>
          {railItems.map(([name, icon]) => (
            <IconButton key={name} aria-label={name}>{icon}</IconButton>
          ))}
          <hr />
          <IconButton aria-label="Locate"><Locate /></IconButton>
        </Rail>
      </Body>

      <Taskbar>
        <Weather>
          <Sun />
          <span>
            16°C
            <small>Ensoleillé</small>
          </span>
        </Weather>
        <Apps>
          <TaskButton aria-label="Start"><WindowsLogo /></TaskButton>
          <TaskSearch>
            <Svg w={18} h={20} color="#fff">
              <circle cx="7.500" cy="8" r="6.700" strokeWidth="2" fill="#5a6785" />
              <path d="M12.500 13L17.500 18.500" strokeWidth="2" />
            </Svg>
            <input placeholder="Search" aria-label="Search" />
            <Elephants />
          </TaskSearch>
          {apps.map(([name, icon, state]) => (
            <TaskButton key={name} aria-label={name} $state={state}>{icon}</TaskButton>
          ))}
        </Apps>
        <Tray>
          <IconButton aria-label="Hidden icons" $color="#fff">
            <Chevron dir="up" size={16} />
          </IconButton>
          <CloudSlot><Cloud /></CloudSlot>
          <Wifi />
          <Muted />
          <Battery />
          <time dateTime="2025-05-16T10:19">
            10:19
            <br />
            16/05/2025
          </time>
        </Tray>
      </Taskbar>
    </Shell>
  )
}

export default App
